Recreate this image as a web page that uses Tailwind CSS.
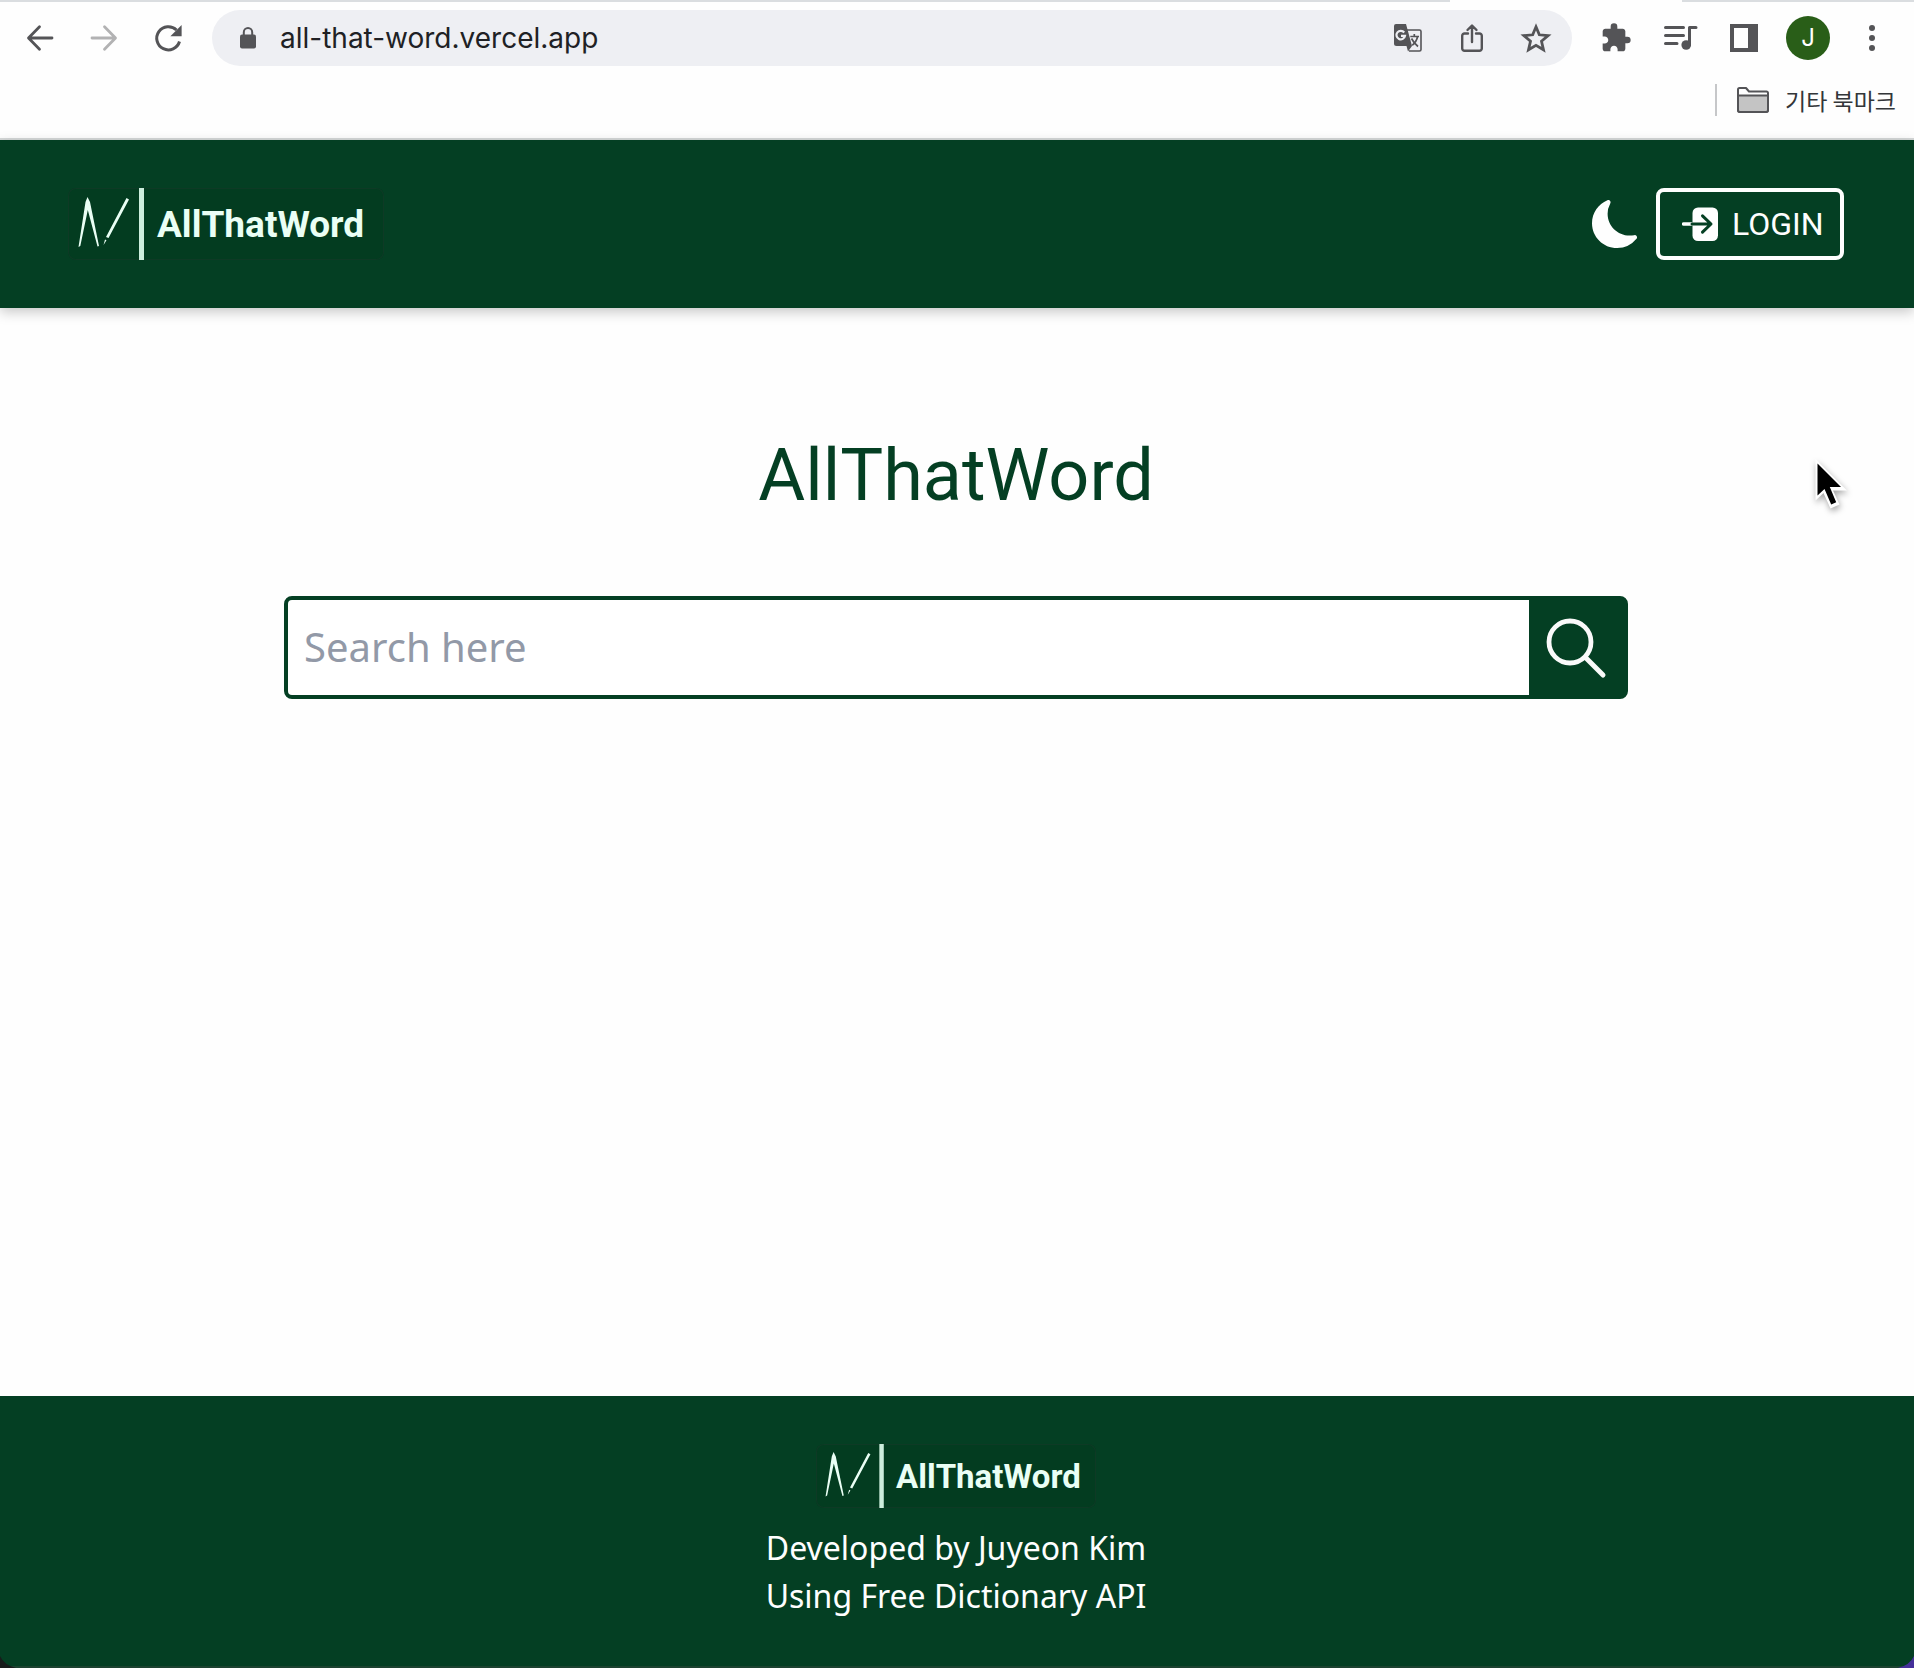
<!DOCTYPE html>
<html lang="en">
<head>
<meta charset="utf-8">
<meta name="viewport" content="width=device-width, initial-scale=1">
<title>AllThatWord</title>
<script src="https://cdn.jsdelivr.net/npm/@tailwindcss/browser@4"></script>
</head>
<body class="relative flex min-h-screen flex-col bg-[#fefefe] font-['Noto_Sans',sans-serif]">

<!-- Browser chrome -->
<div class="flex h-[140px] shrink-0 flex-col border-b-2 border-[#d5d8d8] text-[#545457]">
  <div class="flex h-[2px]">
    <div class="flex-1 bg-[#dadde0]"></div>
    <div class="w-[232px]"></div>
    <div class="w-[232px] bg-[#dadde0]"></div>
  </div>
  <div class="mt-2 flex h-14 items-center">
    <div class="flex w-[212px] items-center gap-8 pl-6">
      <button type="button" aria-label="Back" class="size-8">
        <svg viewBox="0 0 32 32" class="size-8" fill="none" stroke="currentColor" stroke-width="2.8" stroke-linecap="round" stroke-linejoin="round"><path d="M28 16H5M15.500 4.800 4.500 16l11 11.200"/></svg>
      </button>
      <button type="button" aria-label="Forward" class="size-8 text-[#b2b2b3]">
        <svg viewBox="0 0 32 32" class="size-8" fill="none" stroke="currentColor" stroke-width="2.800" stroke-linecap="round" stroke-linejoin="round"><path d="M4 16h23M16.500 4.800l11 11.200-11 11.200"/></svg>
      </button>
      <button type="button" aria-label="Reload" class="size-8">
        <svg viewBox="0 0 32 32" class="size-8"><path d="M27.500 19.500A11.600 11.600 0 1 1 24.500 8" fill="none" stroke="currentColor" stroke-width="3"/><path d="M29.600 3v11.300H18.400z" fill="currentColor"/></svg>
      </button>
    </div>
    <div class="flex h-14 flex-1 items-center rounded-full bg-[#eeeff3] pr-5">
      <svg viewBox="0 0 16 22" class="ml-7 h-[22px] w-4 shrink-0" aria-hidden="true"><rect y="7.500" width="16" height="14" rx="2" fill="currentColor"/><path d="M3.800 9V5.200a4.200 4.200 0 0 1 8.400 0V9" fill="none" stroke="currentColor" stroke-width="2"/></svg>
      <input type="text" aria-label="Address" value="all-that-word.vercel.app" class="ml-6 min-w-0 flex-1 bg-transparent font-['Inter',sans-serif] text-[28px] leading-9 text-[#202124] outline-none">
      <div class="flex gap-8">
        <button type="button" aria-label="Translate" class="size-8">
          <svg viewBox="0 0 32 32" class="size-8"><path d="M15 8h12.500a1.500 1.500 0 0 1 1.500 1.500v18a1.500 1.500 0 0 1-1.500 1.500H17" fill="none" stroke="currentColor" stroke-width="1.600"/><path d="M4 2h10l6 22H4.500A2.500 2.500 0 0 1 2 21.500V4a2 2 0 0 1 2-2zM14.500 24H20l-4 5.500z" fill="currentColor"/><path d="M12.200 10.500A4.300 4.300 0 1 0 13 13.800H9" fill="none" stroke="#eeeff3" stroke-width="2.200"/><path d="M18.300 14.500H27M22.300 12v2.500M25.600 14.500c-.8 4-2.800 6.700-5.400 8.800M19.500 16.500c1.500 3 3.500 5.500 6.500 8" fill="none" stroke="currentColor" stroke-width="1.700"/></svg>
        </button>
        <button type="button" aria-label="Share" class="size-8">
          <svg viewBox="0 0 32 32" class="size-8" fill="none" stroke="currentColor" stroke-width="2.400" stroke-linecap="round" stroke-linejoin="round"><path d="M12 11.500H8.500A2.300 2.300 0 0 0 6.200 13.800V26.500a2.300 2.300 0 0 0 2.300 2.300h15a2.300 2.300 0 0 0 2.300-2.300V13.800a2.300 2.300 0 0 0-2.300-2.300H20M16 20V4M11.500 8 16 3.500 20.500 8"/></svg>
        </button>
        <button type="button" aria-label="Bookmark this tab" class="size-8">
          <svg viewBox="0 0 32 32" class="size-8" fill="none" stroke="currentColor" stroke-width="2.800"><path d="m16 4.800 3.300 8 8.800.8-6.600 5.600 2 8.600-7.500-4.500-7.500 4.500 2-8.600-6.600-5.600 8.800-.8z"/></svg>
        </button>
      </div>
    </div>
    <div class="flex items-center gap-8 pr-[26px] pl-7">
      <button type="button" aria-label="Extensions" class="size-8">
        <svg viewBox="0 0 24 24" class="size-8" fill="currentColor"><path d="M20.500 11H19V7c0-1.100-.9-2-2-2h-4V3.500a2.500 2.500 0 0 0-5 0V5H4c-1.100 0-1.990.9-1.990 2v3.800H3.500c1.490 0 2.700 1.210 2.700 2.700s-1.210 2.700-2.700 2.700H2V20c0 1.100.9 2 2 2h3.800v-1.500c0-1.490 1.210-2.700 2.700-2.700s2.700 1.210 2.700 2.700V22H17c1.100 0 2-.9 2-2v-4h1.500a2.500 2.500 0 0 0 0-5z"/></svg>
      </button>
      <button type="button" aria-label="Media controls" class="size-8">
        <svg viewBox="0 0 32 32" class="size-8 overflow-visible" fill="none" stroke="currentColor" stroke-width="3" stroke-linecap="round"><path d="M1.500 5.500h18M1.500 13.500h18M1.500 21.500H13"/><path d="M32 5.500h-6.500V23" stroke-linejoin="round"/><circle cx="22.200" cy="23" r="4.800" fill="currentColor" stroke="none"/></svg>
      </button>
      <button type="button" aria-label="Side panel" class="size-8">
        <svg viewBox="0 0 32 32" class="size-8"><path fill-rule="evenodd" d="M2 2h28v28H2zM6 6v20h14V6z" fill="currentColor"/></svg>
      </button>
      <button type="button" aria-label="Profile" class="-mx-[6px] size-11 rounded-full bg-[#295e18] font-['Inter',sans-serif] text-2xl leading-none text-white">J</button>
      <button type="button" aria-label="Menu" class="size-8">
        <svg viewBox="0 0 32 32" class="size-8" fill="currentColor"><circle cx="16" cy="6" r="3"/><circle cx="16" cy="16" r="3"/><circle cx="16" cy="26" r="3"/></svg>
      </button>
    </div>
  </div>
  <div class="flex flex-1 items-center justify-end pr-[18px] pb-1">
    <div class="h-8 w-[2px] bg-[#c6c7c9]"></div>
    <button type="button" class="ml-5 flex items-center gap-4 font-['Noto_Sans_CJK_KR',sans-serif] text-[23px] leading-8 text-[#333639]">
      <svg viewBox="0 0 32 26" class="h-[26px] w-8" stroke="#545457" stroke-width="2" stroke-linejoin="round" aria-hidden="true"><path d="M1 23V2.500A1.500 1.500 0 0 1 2.500 1H9l3 3.500h17.500A1.500 1.500 0 0 1 31 6v17a2 2 0 0 1-2 2H3a2 2 0 0 1-2-2z" fill="#fefefe"/><path d="M1 8.500h30V23a2 2 0 0 1-2 2H3a2 2 0 0 1-2-2z" fill="#c4c4c4"/></svg>
      기타 북마크
    </button>
  </div>
</div>

<header class="z-10 flex h-[168px] shrink-0 items-center justify-between bg-[#043f23] pr-[70px] pl-[68px] shadow-[0_4px_12px_rgba(0,0,0,0.22)]">
  <a href="#" class="flex h-[72px] w-[316px] items-center rounded-lg bg-[#033c20] text-[#eafff5] ring-1 ring-[#0e3a25] ring-inset">
    <svg viewBox="0 0 76 72" class="h-[72px] w-[76px] shrink-0" fill="currentColor" aria-hidden="true"><path d="M10.500 59 17.500 14l2-5 2.500 5L31 58l-1.500.5L19.800 22 12.300 58zM58.500 10l2.500 1.500L40.500 50l-2.500-1zM37 51.500l1.500.8-3 4.700z"/><path d="M71 0h5v72h-5z" fill="#cdeedd"/></svg>
    <span class="ml-[13px] font-['Roboto',sans-serif] text-[37px] leading-none font-bold">AllThatWord</span>
  </a>
  <div class="flex items-center gap-4">
    <button type="button" aria-label="Toggle dark mode" class="size-12 text-[#fefefe]">
      <svg viewBox="0 0 16 16" class="size-12" fill="currentColor"><path d="M6 .278a.768.768 0 0 1 .08.858 7.208 7.208 0 0 0-.878 3.460c0 4.021 3.278 7.277 7.318 7.277.527 0 1.040-.055 1.533-.160a.787.787 0 0 1 .810.316.733.733 0 0 1-.031.893A8.349 8.349 0 0 1 8.344 16C3.734 16 0 12.286 0 7.710 0 4.266 2.114 1.312 5.124.060A.752.752 0 0 1 6 .278z"/></svg>
    </button>
    <button type="button" class="flex h-[72px] w-[188px] items-center gap-[14px] rounded-lg border-4 border-[#fefefe] pl-[22px] font-['Roboto',sans-serif] text-[32px] leading-none text-[#fefefe]">
      <svg viewBox="0 0 36 36" class="size-9" fill="none" stroke-linecap="round" stroke-linejoin="round" aria-hidden="true"><rect x="10.500" y="1.500" width="25.500" height="33.500" rx="5.500" fill="currentColor"/><path d="M1.500 18H10" stroke="currentColor" stroke-width="3.400"/><path d="M10 18h18M20.500 9.800l8.500 8.200-8.500 8.200" stroke="#043f23" stroke-width="3"/></svg>
      LOGIN
    </button>
  </div>
</header>

<main class="flex flex-1 flex-col items-center pt-[120px] pr-[286px] pl-[284px]">
  <h1 class="font-['Roboto',sans-serif] text-7xl leading-[96px] text-[#043f23]">AllThatWord</h1>
  <form class="mt-[72px] flex h-[103px] w-full rounded-lg border-4 border-[#043f23] bg-[#043f23]">
    <input type="text" aria-label="Search" placeholder="Search here" class="min-w-0 flex-1 rounded-l-sm bg-white px-4 pb-[2px] text-[40px] text-[#043f23] outline-none placeholder:text-[#9299a7]">
    <button type="button" aria-label="Search" class="flex w-[95px] shrink-0 items-center pl-[14px]">
      <svg viewBox="0 0 64 64" class="size-16" fill="none" stroke="#fafafa" stroke-linecap="round" aria-hidden="true"><circle cx="27" cy="26" r="21" stroke-width="4.800"/><path d="M43 42 60 59" stroke-width="5"/></svg>
    </button>
  </form>
</main>

<footer class="flex h-[272px] shrink-0 flex-col items-center border-b-2 border-[#1c4330] bg-[#043f23] pt-12 pr-[2px] text-[#fefefe]">
  <a href="#" class="flex h-16 w-[280px] items-center rounded-lg bg-[#033c20] text-[#eafff5] ring-1 ring-[#0e3a25] ring-inset">
    <svg viewBox="0 0 76 72" class="h-16 w-[68px] shrink-0" fill="currentColor" aria-hidden="true"><path d="M10.500 59 17.500 14l2-5 2.500 5L31 58l-1.500.5L19.800 22 12.300 58zM58.500 10l2.500 1.500L40.500 50l-2.500-1zM37 51.500l1.500.8-3 4.700z"/><path d="M71 0h5v72h-5z" fill="#cdeedd"/></svg>
    <span class="ml-3 font-['Roboto',sans-serif] text-[33px] leading-none font-bold">AllThatWord</span>
  </a>
  <p class="mt-4 text-center text-[32px] leading-[48px]">Developed by Juyeon Kim<br>Using Free Dictionary API</p>
</footer>

<!-- Rounded window corners -->
<svg viewBox="0 0 16 12" class="absolute bottom-0 left-0 h-3 w-4" aria-hidden="true"><path d="M0 0Q4 9 16 12H0z" fill="#181c1b"/></svg>
<svg viewBox="0 0 16 12" class="absolute right-0 bottom-0 h-3 w-4" aria-hidden="true"><path d="M16 0Q12 9 0 12h16z" fill="#45309a"/></svg>

<!-- Mouse pointer -->
<svg viewBox="0 0 36 54" class="absolute top-[457px] right-[65px] h-[54px] w-9 drop-shadow-[1px_3px_3px_rgba(0,0,0,0.35)]" aria-hidden="true"><path d="M2.500 2v41.500l8-7.500 7 15.500 9-4-6.500-14H34z" fill="#fff"/><path d="M4.500 6.500v32l7-6.500 6.700 15.500 5-2.200L16.800 30H28z" fill="#000"/></svg>
</body>
</html>
